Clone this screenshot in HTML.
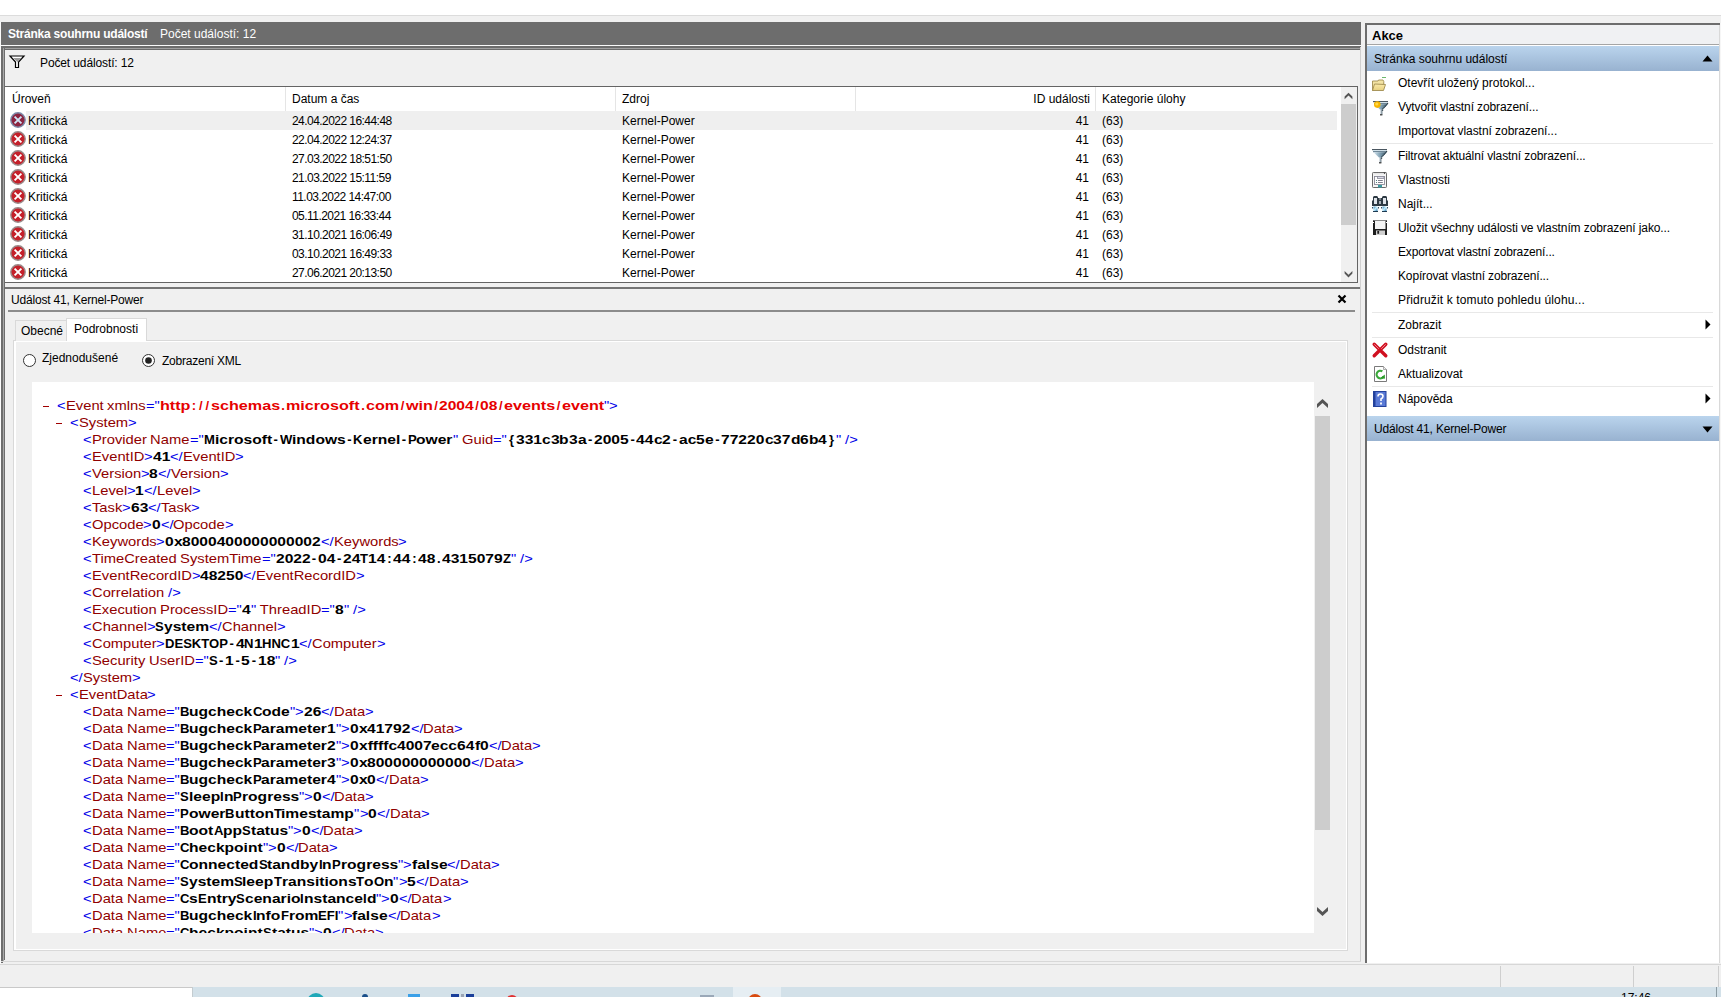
<!DOCTYPE html>
<html><head><meta charset="utf-8">
<style>
*{margin:0;padding:0;box-sizing:border-box}
html,body{width:1721px;height:997px;overflow:hidden;background:#f0f0f0;font-family:"Liberation Sans",sans-serif;font-size:12px;color:#000;position:relative}
.a{position:absolute}
.t{position:absolute;white-space:nowrap;line-height:14px}
.tr{position:absolute;white-space:nowrap;line-height:14px;text-align:right}
.x{position:absolute;white-space:nowrap;font-family:"Liberation Sans",sans-serif;font-size:13px;line-height:17px}
.x span{display:inline-block;white-space:pre;transform-origin:0 0}
.x .r{color:#900000}.x .m{color:#0000e8}.x .b,.x .bd,.x .bu,.x .bp{color:#000;font-weight:bold}.x .ns,.x .nsd,.x .nsu,.x .nsp{color:#e60000;font-weight:bold}
svg{position:absolute;overflow:visible}
</style></head><body>

<div class="a" style="left:0px;top:0px;width:1721px;height:15px;background:#fff;"></div>
<div class="a" style="left:0px;top:15px;width:1721px;height:1px;background:#dcdcdc;"></div>
<div class="a" style="left:0px;top:22px;width:1px;height:942px;background:#fbfbfb;"></div>
<div class="a" style="left:1px;top:22px;width:2px;height:941px;background:#6d6d6d;"></div>
<div class="a" style="left:1px;top:22px;width:1360px;height:23px;background:#6d6d6d;"></div>
<div class="t" style="left:8px;top:27px;color:#fff;font-weight:bold;letter-spacing:-0.22px">Stránka souhrnu událostí</div>
<div class="t" style="left:160px;top:27px;color:#fff">Počet událostí: 12</div>
<div class="a" style="left:1px;top:45px;width:1360px;height:1px;background:#fbfbfb;"></div>
<div class="a" style="left:3px;top:46px;width:1358px;height:2px;background:#6d6d6d;"></div>
<div class="a" style="left:3px;top:48px;width:1px;height:913px;background:#a8a8a8;"></div>
<div class="a" style="left:3px;top:48px;width:1358px;height:1px;background:#a0a0a0;"></div>
<div class="a" style="left:4px;top:49px;width:1357px;height:1px;background:#6d6d6d;"></div>
<div class="a" style="left:4px;top:47px;width:1px;height:913px;background:#6d6d6d;"></div>
<div class="a" style="left:1360px;top:47px;width:1px;height:915px;background:#d0d0d0;"></div>
<div class="a" style="left:1px;top:961px;width:1360px;height:1px;background:#d8d8d8;"></div>
<svg style="left:9px;top:55px" width="16" height="14" viewBox="0 0 16 14"><path d="M1 1 L15 1 L9.5 7 L9.5 12.5 L6.5 12.5 L6.5 7 Z" fill="#fff" stroke="#000" stroke-width="1.2"/><path d="M4 3 L12.5 3 L8.5 7 Z" fill="#9a9a9a"/></svg>
<div class="t" style="left:40px;top:56px;letter-spacing:-0.12px">Počet událostí: 12</div>
<div class="a" style="left:4px;top:86px;width:1354px;height:197px;background:#fff;"></div>
<div class="a" style="left:4px;top:86px;width:1354px;height:1px;background:#646464;"></div>
<div class="a" style="left:4px;top:282px;width:1354px;height:1px;background:#646464;"></div>
<div class="a" style="left:1357px;top:86px;width:1px;height:197px;background:#646464;"></div>
<div class="a" style="left:4px;top:86px;width:1px;height:197px;background:#6d6d6d;"></div>
<div class="a" style="left:285px;top:87px;width:1px;height:24px;background:#e5e5e5;"></div>
<div class="a" style="left:615px;top:87px;width:1px;height:24px;background:#e5e5e5;"></div>
<div class="a" style="left:855px;top:87px;width:1px;height:24px;background:#e5e5e5;"></div>
<div class="a" style="left:1095px;top:87px;width:1px;height:24px;background:#e5e5e5;"></div>
<div class="t" style="left:12px;top:92px;">Úroveň</div>
<div class="t" style="left:292px;top:92px;">Datum a čas</div>
<div class="t" style="left:622px;top:92px;">Zdroj</div>
<div class="tr" style="left:900px;width:190px;top:92px">ID události</div>
<div class="t" style="left:1102px;top:92px;">Kategorie úlohy</div>
<div class="a" style="left:26px;top:111px;width:1311px;height:19px;background:#efefef;"></div>
<svg style="left:10px;top:112px" width="16" height="16" viewBox="0 0 16 16"><circle cx="8" cy="8" r="7.2" fill="#8b2440" stroke="#7c8aa8" stroke-width="1.4"/><path d="M4.6 4.6 L11.4 11.4 M11.4 4.6 L4.6 11.4" stroke="#cfe3f5" stroke-width="1.9"/></svg>
<div class="t" style="left:28px;top:114px;">Kritická</div>
<div class="t" style="left:292px;top:114px;letter-spacing:-0.55px">24.04.2022 16:44:48</div>
<div class="t" style="left:622px;top:114px;">Kernel-Power</div>
<div class="tr" style="left:1000px;width:89px;top:114px">41</div>
<div class="t" style="left:1102px;top:114px;">(63)</div>
<svg style="left:10px;top:131px" width="16" height="16" viewBox="0 0 16 16"><circle cx="8" cy="8" r="7.2" fill="#c4202a" stroke="#9a8a8a" stroke-width="1.4"/><path d="M4.6 4.6 L11.4 11.4 M11.4 4.6 L4.6 11.4" stroke="#fff" stroke-width="1.9"/></svg>
<div class="t" style="left:28px;top:133px;">Kritická</div>
<div class="t" style="left:292px;top:133px;letter-spacing:-0.55px">22.04.2022 12:24:37</div>
<div class="t" style="left:622px;top:133px;">Kernel-Power</div>
<div class="tr" style="left:1000px;width:89px;top:133px">41</div>
<div class="t" style="left:1102px;top:133px;">(63)</div>
<svg style="left:10px;top:150px" width="16" height="16" viewBox="0 0 16 16"><circle cx="8" cy="8" r="7.2" fill="#c4202a" stroke="#9a8a8a" stroke-width="1.4"/><path d="M4.6 4.6 L11.4 11.4 M11.4 4.6 L4.6 11.4" stroke="#fff" stroke-width="1.9"/></svg>
<div class="t" style="left:28px;top:152px;">Kritická</div>
<div class="t" style="left:292px;top:152px;letter-spacing:-0.55px">27.03.2022 18:51:50</div>
<div class="t" style="left:622px;top:152px;">Kernel-Power</div>
<div class="tr" style="left:1000px;width:89px;top:152px">41</div>
<div class="t" style="left:1102px;top:152px;">(63)</div>
<svg style="left:10px;top:169px" width="16" height="16" viewBox="0 0 16 16"><circle cx="8" cy="8" r="7.2" fill="#c4202a" stroke="#9a8a8a" stroke-width="1.4"/><path d="M4.6 4.6 L11.4 11.4 M11.4 4.6 L4.6 11.4" stroke="#fff" stroke-width="1.9"/></svg>
<div class="t" style="left:28px;top:171px;">Kritická</div>
<div class="t" style="left:292px;top:171px;letter-spacing:-0.55px">21.03.2022 15:11:59</div>
<div class="t" style="left:622px;top:171px;">Kernel-Power</div>
<div class="tr" style="left:1000px;width:89px;top:171px">41</div>
<div class="t" style="left:1102px;top:171px;">(63)</div>
<svg style="left:10px;top:188px" width="16" height="16" viewBox="0 0 16 16"><circle cx="8" cy="8" r="7.2" fill="#c4202a" stroke="#9a8a8a" stroke-width="1.4"/><path d="M4.6 4.6 L11.4 11.4 M11.4 4.6 L4.6 11.4" stroke="#fff" stroke-width="1.9"/></svg>
<div class="t" style="left:28px;top:190px;">Kritická</div>
<div class="t" style="left:292px;top:190px;letter-spacing:-0.55px">11.03.2022 14:47:00</div>
<div class="t" style="left:622px;top:190px;">Kernel-Power</div>
<div class="tr" style="left:1000px;width:89px;top:190px">41</div>
<div class="t" style="left:1102px;top:190px;">(63)</div>
<svg style="left:10px;top:207px" width="16" height="16" viewBox="0 0 16 16"><circle cx="8" cy="8" r="7.2" fill="#c4202a" stroke="#9a8a8a" stroke-width="1.4"/><path d="M4.6 4.6 L11.4 11.4 M11.4 4.6 L4.6 11.4" stroke="#fff" stroke-width="1.9"/></svg>
<div class="t" style="left:28px;top:209px;">Kritická</div>
<div class="t" style="left:292px;top:209px;letter-spacing:-0.55px">05.11.2021 16:33:44</div>
<div class="t" style="left:622px;top:209px;">Kernel-Power</div>
<div class="tr" style="left:1000px;width:89px;top:209px">41</div>
<div class="t" style="left:1102px;top:209px;">(63)</div>
<svg style="left:10px;top:226px" width="16" height="16" viewBox="0 0 16 16"><circle cx="8" cy="8" r="7.2" fill="#c4202a" stroke="#9a8a8a" stroke-width="1.4"/><path d="M4.6 4.6 L11.4 11.4 M11.4 4.6 L4.6 11.4" stroke="#fff" stroke-width="1.9"/></svg>
<div class="t" style="left:28px;top:228px;">Kritická</div>
<div class="t" style="left:292px;top:228px;letter-spacing:-0.55px">31.10.2021 16:06:49</div>
<div class="t" style="left:622px;top:228px;">Kernel-Power</div>
<div class="tr" style="left:1000px;width:89px;top:228px">41</div>
<div class="t" style="left:1102px;top:228px;">(63)</div>
<svg style="left:10px;top:245px" width="16" height="16" viewBox="0 0 16 16"><circle cx="8" cy="8" r="7.2" fill="#c4202a" stroke="#9a8a8a" stroke-width="1.4"/><path d="M4.6 4.6 L11.4 11.4 M11.4 4.6 L4.6 11.4" stroke="#fff" stroke-width="1.9"/></svg>
<div class="t" style="left:28px;top:247px;">Kritická</div>
<div class="t" style="left:292px;top:247px;letter-spacing:-0.55px">03.10.2021 16:49:33</div>
<div class="t" style="left:622px;top:247px;">Kernel-Power</div>
<div class="tr" style="left:1000px;width:89px;top:247px">41</div>
<div class="t" style="left:1102px;top:247px;">(63)</div>
<svg style="left:10px;top:264px" width="16" height="16" viewBox="0 0 16 16"><circle cx="8" cy="8" r="7.2" fill="#c4202a" stroke="#9a8a8a" stroke-width="1.4"/><path d="M4.6 4.6 L11.4 11.4 M11.4 4.6 L4.6 11.4" stroke="#fff" stroke-width="1.9"/></svg>
<div class="t" style="left:28px;top:266px;">Kritická</div>
<div class="t" style="left:292px;top:266px;letter-spacing:-0.55px">27.06.2021 20:13:50</div>
<div class="t" style="left:622px;top:266px;">Kernel-Power</div>
<div class="tr" style="left:1000px;width:89px;top:266px">41</div>
<div class="t" style="left:1102px;top:266px;">(63)</div>
<div class="a" style="left:1341px;top:87px;width:16px;height:195px;background:#f0f0f0;"></div>
<div class="a" style="left:1341px;top:104px;width:15px;height:121px;background:#cdcdcd;"></div>
<svg style="left:0;top:0" width="1721" height="997"><path d="M1344.6 96.6 L1348.5 92.7 L1352.4 96.6 L1352.4 99.3 L1348.5 95.4 L1344.6 99.3 Z" fill="#555"/></svg>
<svg style="left:0;top:0" width="1721" height="997"><path d="M1344.6 270.9 L1348.5 274.8 L1352.4 270.9 L1352.4 273.6 L1348.5 277.5 L1344.6 273.6 Z" fill="#555"/></svg>
<div class="a" style="left:5px;top:287px;width:1355px;height:2px;background:#747474;"></div>
<div class="a" style="left:5px;top:289px;width:1355px;height:22px;background:#f0f0f0;"></div>
<div class="t" style="left:11px;top:293px;letter-spacing:-0.18px">Událost 41, Kernel-Power</div>
<svg style="left:1337px;top:294px" width="10" height="10" viewBox="0 0 10 10"><path d="M1.5 1.5 L8.5 8.5 M8.5 1.5 L1.5 8.5" stroke="#000" stroke-width="2.2"/></svg>
<div class="a" style="left:8px;top:310px;width:1347px;height:2px;background:#8c8c8c;"></div>
<div class="a" style="left:13px;top:340px;width:1335px;height:611px;background:#d9d9d9;"></div>
<div class="a" style="left:14px;top:341px;width:1333px;height:609px;background:#fff;"></div>
<div class="a" style="left:16px;top:342px;width:1330px;height:607px;background:#f0f0f0;"></div>
<div class="a" style="left:15px;top:320px;width:52px;height:21px;background:#d9d9d9;"></div>
<div class="a" style="left:16px;top:321px;width:50px;height:20px;background:#f0f0f0;"></div>
<div class="a" style="left:66px;top:318px;width:81px;height:23px;background:#d9d9d9;"></div>
<div class="a" style="left:67px;top:319px;width:79px;height:23px;background:#fff;"></div>
<div class="t" style="left:21px;top:324px;">Obecné</div>
<div class="t" style="left:74px;top:322px;">Podrobnosti</div>
<svg style="left:22px;top:353px" width="15" height="15" viewBox="0 0 15 15"><circle cx="7.5" cy="7.5" r="6" fill="#fff" stroke="#333" stroke-width="1"/></svg>
<div class="t" style="left:42px;top:351px;">Zjednodušené</div>
<svg style="left:141px;top:353px" width="15" height="15" viewBox="0 0 15 15"><circle cx="7.5" cy="7.5" r="6" fill="#fff" stroke="#333" stroke-width="1"/><circle cx="7.5" cy="7.5" r="3.3" fill="#222"/></svg>
<div class="t" style="left:162px;top:354px;letter-spacing:-0.23px">Zobrazení XML</div>
<div class="a" style="left:32px;top:382px;width:1282px;height:551px;background:#fff;"></div>
<div class="a" style="left:1314px;top:382px;width:17px;height:551px;background:#f0f0f0;"></div>
<div class="a" style="left:1315px;top:416px;width:15px;height:414px;background:#cdcdcd;"></div>
<svg style="left:0;top:0" width="1721" height="997"><path d="M1317 404 L1322.5 399 L1328 404 L1328 408 L1322.5 403 L1317 408 Z" fill="#555"/></svg>
<svg style="left:0;top:0" width="1721" height="997"><path d="M1317 907 L1322.5 912 L1328 907 L1328 911 L1322.5 916 L1317 911 Z" fill="#555"/></svg>
<div class="a" style="left:32px;top:382px;width:1282px;height:551px;overflow:hidden">
<div class="a" style="left:11px;top:24px;width:6px;height:1.4px;background:#a00000"></div>
<div class="x" style="left:25px;top:15px"><span class="m" style="transform:scaleX(1.1327);margin-right:1.008px">&lt;</span><span class="r" style="transform:scaleX(1.1339);margin-right:4.453px">Event</span><span class="r" style="transform:scaleX(1.1339);margin-right:5.030px"> xmlns</span><span class="m" style="transform:scaleX(1.1327);margin-right:1.621px">="</span><span class="ns" style="transform:scaleX(1.2422);margin-right:5.946px">http</span><span class="nsp" style="letter-spacing:2.988px;padding-left:1.494px;margin-right:-1.494px">://</span><span class="ns" style="transform:scaleX(1.2422);margin-right:13.482px">schemas</span><span class="nsp" style="letter-spacing:2.810px;padding-left:1.405px;margin-right:-1.405px">.</span><span class="ns" style="transform:scaleX(1.2422);margin-right:14.348px">microsoft</span><span class="nsp" style="letter-spacing:2.810px;padding-left:1.405px;margin-right:-1.405px">.</span><span class="ns" style="transform:scaleX(1.2422);margin-right:6.476px">com</span><span class="nsp" style="letter-spacing:2.810px;padding-left:1.405px;margin-right:-1.405px">/</span><span class="ns" style="transform:scaleX(1.2422);margin-right:5.250px">win</span><span class="nsp" style="letter-spacing:2.810px;padding-left:1.405px;margin-right:-1.405px">/</span><span class="nsd" style="transform:scaleX(1.1990);margin-right:5.755px">2004</span><span class="nsp" style="letter-spacing:2.810px;padding-left:1.405px;margin-right:-1.405px">/</span><span class="nsd" style="transform:scaleX(1.1990);margin-right:2.879px">08</span><span class="nsp" style="letter-spacing:2.810px;padding-left:1.405px;margin-right:-1.405px">/</span><span class="ns" style="transform:scaleX(1.2422);margin-right:9.981px">events</span><span class="nsp" style="letter-spacing:2.810px;padding-left:1.405px;margin-right:-1.405px">/</span><span class="ns" style="transform:scaleX(1.2422);margin-right:8.228px">event</span><span class="m" style="transform:scaleX(1.1327);margin-right:0.614px">"</span><span class="m" style="transform:scaleX(1.1327);margin-right:1.008px">&gt;</span></div>
<div class="a" style="left:24px;top:41px;width:6px;height:1.4px;background:#a00000"></div>
<div class="x" style="left:38px;top:32px"><span class="m" style="transform:scaleX(1.1327);margin-right:1.008px">&lt;</span><span class="r" style="transform:scaleX(1.1339);margin-right:5.804px">System</span><span class="m" style="transform:scaleX(1.1327);margin-right:1.008px">&gt;</span></div>
<div class="x" style="left:51px;top:49px"><span class="m" style="transform:scaleX(1.1327);margin-right:1.008px">&lt;</span><span class="r" style="transform:scaleX(1.1339);margin-right:6.484px">Provider</span><span class="r" style="transform:scaleX(1.1339);margin-right:5.128px"> Name</span><span class="m" style="transform:scaleX(1.1327);margin-right:1.621px">="</span><span class="bu" style="transform:scaleX(1.0047);margin-right:0.051px">M</span><span class="b" style="transform:scaleX(1.2002);margin-right:9.545px">icrosoft</span><span class="bp" style="letter-spacing:3.367px;padding-left:1.684px;margin-right:-1.684px">-</span><span class="bu" style="transform:scaleX(1.0047);margin-right:0.058px">W</span><span class="b" style="transform:scaleX(1.2002);margin-right:8.966px">indows</span><span class="bp" style="letter-spacing:3.367px;padding-left:1.684px;margin-right:-1.684px">-</span><span class="bu" style="transform:scaleX(1.0047);margin-right:0.044px">K</span><span class="b" style="transform:scaleX(1.2002);margin-right:6.223px">ernel</span><span class="bp" style="letter-spacing:3.367px;padding-left:1.684px;margin-right:-1.684px">-</span><span class="bu" style="transform:scaleX(1.0047);margin-right:0.041px">P</span><span class="b" style="transform:scaleX(1.2002);margin-right:6.076px">ower</span><span class="m" style="transform:scaleX(1.1327);margin-right:0.614px">"</span><span class="r" style="transform:scaleX(1.1339);margin-right:4.162px"> Guid</span><span class="m" style="transform:scaleX(1.1327);margin-right:1.621px">="</span><span class="bp" style="letter-spacing:3.924px;padding-left:1.962px;margin-right:-1.962px">{</span><span class="bd" style="transform:scaleX(1.1990);margin-right:4.319px">331</span><span class="b" style="transform:scaleX(1.2002);margin-right:1.448px">c</span><span class="bd" style="transform:scaleX(1.1990);margin-right:1.440px">3</span><span class="b" style="transform:scaleX(1.2002);margin-right:1.592px">b</span><span class="bd" style="transform:scaleX(1.1990);margin-right:1.440px">3</span><span class="b" style="transform:scaleX(1.2002);margin-right:1.448px">a</span><span class="bp" style="letter-spacing:3.367px;padding-left:1.684px;margin-right:-1.684px">-</span><span class="bd" style="transform:scaleX(1.1990);margin-right:5.755px">2005</span><span class="bp" style="letter-spacing:3.367px;padding-left:1.684px;margin-right:-1.684px">-</span><span class="bd" style="transform:scaleX(1.1990);margin-right:2.879px">44</span><span class="b" style="transform:scaleX(1.2002);margin-right:1.448px">c</span><span class="bd" style="transform:scaleX(1.1990);margin-right:1.440px">2</span><span class="bp" style="letter-spacing:3.367px;padding-left:1.684px;margin-right:-1.684px">-</span><span class="b" style="transform:scaleX(1.2002);margin-right:2.897px">ac</span><span class="bd" style="transform:scaleX(1.1990);margin-right:1.440px">5</span><span class="b" style="transform:scaleX(1.2002);margin-right:1.448px">e</span><span class="bp" style="letter-spacing:3.367px;padding-left:1.684px;margin-right:-1.684px">-</span><span class="bd" style="transform:scaleX(1.1990);margin-right:7.195px">77220</span><span class="b" style="transform:scaleX(1.2002);margin-right:1.448px">c</span><span class="bd" style="transform:scaleX(1.1990);margin-right:2.879px">37</span><span class="b" style="transform:scaleX(1.2002);margin-right:1.592px">d</span><span class="bd" style="transform:scaleX(1.1990);margin-right:1.440px">6</span><span class="b" style="transform:scaleX(1.2002);margin-right:1.592px">b</span><span class="bd" style="transform:scaleX(1.1990);margin-right:1.440px">4</span><span class="bp" style="letter-spacing:3.924px;padding-left:1.962px;margin-right:-1.962px">}</span><span class="m" style="transform:scaleX(1.1327);margin-right:0.614px">"</span><span class="m" style="transform:scaleX(1.1327);margin-right:1.968px"> /&gt;</span></div>
<div class="x" style="left:51px;top:66px"><span class="m" style="transform:scaleX(1.1327);margin-right:1.008px">&lt;</span><span class="r" style="transform:scaleX(1.1339);margin-right:6.193px">EventID</span><span class="m" style="transform:scaleX(1.1327);margin-right:1.008px">&gt;</span><span class="bd" style="transform:scaleX(1.1990);margin-right:2.879px">41</span><span class="m" style="transform:scaleX(1.1327);margin-right:1.489px">&lt;/</span><span class="r" style="transform:scaleX(1.1339);margin-right:6.193px">EventID</span><span class="m" style="transform:scaleX(1.1327);margin-right:1.008px">&gt;</span></div>
<div class="x" style="left:51px;top:83px"><span class="m" style="transform:scaleX(1.1327);margin-right:1.008px">&lt;</span><span class="r" style="transform:scaleX(1.1339);margin-right:5.808px">Version</span><span class="m" style="transform:scaleX(1.1327);margin-right:1.008px">&gt;</span><span class="bd" style="transform:scaleX(1.1990);margin-right:1.440px">8</span><span class="m" style="transform:scaleX(1.1327);margin-right:1.489px">&lt;/</span><span class="r" style="transform:scaleX(1.1339);margin-right:5.808px">Version</span><span class="m" style="transform:scaleX(1.1327);margin-right:1.008px">&gt;</span></div>
<div class="x" style="left:51px;top:100px"><span class="m" style="transform:scaleX(1.1327);margin-right:1.008px">&lt;</span><span class="r" style="transform:scaleX(1.1339);margin-right:4.162px">Level</span><span class="m" style="transform:scaleX(1.1327);margin-right:1.008px">&gt;</span><span class="bd" style="transform:scaleX(1.1990);margin-right:1.440px">1</span><span class="m" style="transform:scaleX(1.1327);margin-right:1.489px">&lt;/</span><span class="r" style="transform:scaleX(1.1339);margin-right:4.162px">Level</span><span class="m" style="transform:scaleX(1.1327);margin-right:1.008px">&gt;</span></div>
<div class="x" style="left:51px;top:117px"><span class="m" style="transform:scaleX(1.1327);margin-right:1.008px">&lt;</span><span class="r" style="transform:scaleX(1.1339);margin-right:3.580px">Task</span><span class="m" style="transform:scaleX(1.1327);margin-right:1.008px">&gt;</span><span class="bd" style="transform:scaleX(1.1990);margin-right:2.879px">63</span><span class="m" style="transform:scaleX(1.1327);margin-right:1.489px">&lt;/</span><span class="r" style="transform:scaleX(1.1339);margin-right:3.580px">Task</span><span class="m" style="transform:scaleX(1.1327);margin-right:1.008px">&gt;</span></div>
<div class="x" style="left:51px;top:134px"><span class="m" style="transform:scaleX(1.1327);margin-right:1.008px">&lt;</span><span class="r" style="transform:scaleX(1.1339);margin-right:6.099px">Opcode</span><span class="m" style="transform:scaleX(1.1327);margin-right:1.008px">&gt;</span><span class="bd" style="transform:scaleX(1.1990);margin-right:1.440px">0</span><span class="m" style="transform:scaleX(1.1327);margin-right:1.489px">&lt;/</span><span class="r" style="transform:scaleX(1.1339);margin-right:6.099px">Opcode</span><span class="m" style="transform:scaleX(1.1327);margin-right:1.008px">&gt;</span></div>
<div class="x" style="left:51px;top:151px"><span class="m" style="transform:scaleX(1.1327);margin-right:1.008px">&lt;</span><span class="r" style="transform:scaleX(1.1339);margin-right:7.644px">Keywords</span><span class="m" style="transform:scaleX(1.1327);margin-right:1.008px">&gt;</span><span class="bd" style="transform:scaleX(1.1990);margin-right:1.440px">0</span><span class="b" style="transform:scaleX(1.2002);margin-right:1.448px">x</span><span class="bd" style="transform:scaleX(1.1990);margin-right:23.022px">8000400000000002</span><span class="m" style="transform:scaleX(1.1327);margin-right:1.489px">&lt;/</span><span class="r" style="transform:scaleX(1.1339);margin-right:7.644px">Keywords</span><span class="m" style="transform:scaleX(1.1327);margin-right:1.008px">&gt;</span></div>
<div class="x" style="left:51px;top:168px"><span class="m" style="transform:scaleX(1.1327);margin-right:1.008px">&lt;</span><span class="r" style="transform:scaleX(1.1339);margin-right:9.997px">TimeCreated</span><span class="r" style="transform:scaleX(1.1339);margin-right:10.092px"> SystemTime</span><span class="m" style="transform:scaleX(1.1327);margin-right:1.621px">="</span><span class="bd" style="transform:scaleX(1.1990);margin-right:5.755px">2022</span><span class="bp" style="letter-spacing:3.367px;padding-left:1.684px;margin-right:-1.684px">-</span><span class="bd" style="transform:scaleX(1.1990);margin-right:2.879px">04</span><span class="bp" style="letter-spacing:3.367px;padding-left:1.684px;margin-right:-1.684px">-</span><span class="bd" style="transform:scaleX(1.1990);margin-right:2.879px">24</span><span class="bu" style="transform:scaleX(1.0047);margin-right:0.037px">T</span><span class="bd" style="transform:scaleX(1.1990);margin-right:2.879px">14</span><span class="bp" style="letter-spacing:3.367px;padding-left:1.684px;margin-right:-1.684px">:</span><span class="bd" style="transform:scaleX(1.1990);margin-right:2.879px">44</span><span class="bp" style="letter-spacing:3.367px;padding-left:1.684px;margin-right:-1.684px">:</span><span class="bd" style="transform:scaleX(1.1990);margin-right:2.879px">48</span><span class="bp" style="letter-spacing:2.810px;padding-left:1.405px;margin-right:-1.405px">.</span><span class="bd" style="transform:scaleX(1.1990);margin-right:10.074px">4315079</span><span class="bu" style="transform:scaleX(1.0047);margin-right:0.037px">Z</span><span class="m" style="transform:scaleX(1.1327);margin-right:0.614px">"</span><span class="m" style="transform:scaleX(1.1327);margin-right:1.968px"> /&gt;</span></div>
<div class="x" style="left:51px;top:185px"><span class="m" style="transform:scaleX(1.1327);margin-right:1.008px">&lt;</span><span class="r" style="transform:scaleX(1.1339);margin-right:11.805px">EventRecordID</span><span class="m" style="transform:scaleX(1.1327);margin-right:1.008px">&gt;</span><span class="bd" style="transform:scaleX(1.1990);margin-right:7.195px">48250</span><span class="m" style="transform:scaleX(1.1327);margin-right:1.489px">&lt;/</span><span class="r" style="transform:scaleX(1.1339);margin-right:11.805px">EventRecordID</span><span class="m" style="transform:scaleX(1.1327);margin-right:1.008px">&gt;</span></div>
<div class="x" style="left:51px;top:202px"><span class="m" style="transform:scaleX(1.1327);margin-right:1.008px">&lt;</span><span class="r" style="transform:scaleX(1.1339);margin-right:8.516px">Correlation</span><span class="m" style="transform:scaleX(1.1327);margin-right:1.968px"> /&gt;</span></div>
<div class="x" style="left:51px;top:219px"><span class="m" style="transform:scaleX(1.1327);margin-right:1.008px">&lt;</span><span class="r" style="transform:scaleX(1.1339);margin-right:7.646px">Execution</span><span class="r" style="transform:scaleX(1.1339);margin-right:8.514px"> ProcessID</span><span class="m" style="transform:scaleX(1.1327);margin-right:1.621px">="</span><span class="bd" style="transform:scaleX(1.1990);margin-right:1.440px">4</span><span class="m" style="transform:scaleX(1.1327);margin-right:0.614px">"</span><span class="r" style="transform:scaleX(1.1339);margin-right:7.710px"> ThreadID</span><span class="m" style="transform:scaleX(1.1327);margin-right:1.621px">="</span><span class="bd" style="transform:scaleX(1.1990);margin-right:1.440px">8</span><span class="m" style="transform:scaleX(1.1327);margin-right:0.614px">"</span><span class="m" style="transform:scaleX(1.1327);margin-right:1.968px"> /&gt;</span></div>
<div class="x" style="left:51px;top:236px"><span class="m" style="transform:scaleX(1.1327);margin-right:1.008px">&lt;</span><span class="r" style="transform:scaleX(1.1339);margin-right:6.486px">Channel</span><span class="m" style="transform:scaleX(1.1327);margin-right:1.008px">&gt;</span><span class="bu" style="transform:scaleX(1.0047);margin-right:0.041px">S</span><span class="b" style="transform:scaleX(1.2002);margin-right:7.524px">ystem</span><span class="m" style="transform:scaleX(1.1327);margin-right:1.489px">&lt;/</span><span class="r" style="transform:scaleX(1.1339);margin-right:6.486px">Channel</span><span class="m" style="transform:scaleX(1.1327);margin-right:1.008px">&gt;</span></div>
<div class="x" style="left:51px;top:253px"><span class="m" style="transform:scaleX(1.1327);margin-right:1.008px">&lt;</span><span class="r" style="transform:scaleX(1.1339);margin-right:7.644px">Computer</span><span class="m" style="transform:scaleX(1.1327);margin-right:1.008px">&gt;</span><span class="bu" style="transform:scaleX(1.0047);margin-right:0.295px">DESKTOP</span><span class="bp" style="letter-spacing:3.367px;padding-left:1.684px;margin-right:-1.684px">-</span><span class="bd" style="transform:scaleX(1.1990);margin-right:1.440px">4</span><span class="bu" style="transform:scaleX(1.0047);margin-right:0.044px">N</span><span class="bd" style="transform:scaleX(1.1990);margin-right:1.440px">1</span><span class="bu" style="transform:scaleX(1.0047);margin-right:0.133px">HNC</span><span class="bd" style="transform:scaleX(1.1990);margin-right:1.440px">1</span><span class="m" style="transform:scaleX(1.1327);margin-right:1.489px">&lt;/</span><span class="r" style="transform:scaleX(1.1339);margin-right:7.644px">Computer</span><span class="m" style="transform:scaleX(1.1327);margin-right:1.008px">&gt;</span></div>
<div class="x" style="left:51px;top:270px"><span class="m" style="transform:scaleX(1.1327);margin-right:1.008px">&lt;</span><span class="r" style="transform:scaleX(1.1339);margin-right:6.290px">Security</span><span class="r" style="transform:scaleX(1.1339);margin-right:5.901px"> UserID</span><span class="m" style="transform:scaleX(1.1327);margin-right:1.621px">="</span><span class="bu" style="transform:scaleX(1.0047);margin-right:0.041px">S</span><span class="bp" style="letter-spacing:3.367px;padding-left:1.684px;margin-right:-1.684px">-</span><span class="bd" style="transform:scaleX(1.1990);margin-right:1.440px">1</span><span class="bp" style="letter-spacing:3.367px;padding-left:1.684px;margin-right:-1.684px">-</span><span class="bd" style="transform:scaleX(1.1990);margin-right:1.440px">5</span><span class="bp" style="letter-spacing:3.367px;padding-left:1.684px;margin-right:-1.684px">-</span><span class="bd" style="transform:scaleX(1.1990);margin-right:2.879px">18</span><span class="m" style="transform:scaleX(1.1327);margin-right:0.614px">"</span><span class="m" style="transform:scaleX(1.1327);margin-right:1.968px"> /&gt;</span></div>
<div class="x" style="left:38px;top:287px"><span class="m" style="transform:scaleX(1.1327);margin-right:1.489px">&lt;/</span><span class="r" style="transform:scaleX(1.1339);margin-right:5.804px">System</span><span class="m" style="transform:scaleX(1.1327);margin-right:1.008px">&gt;</span></div>
<div class="a" style="left:24px;top:313px;width:6px;height:1.4px;background:#a00000"></div>
<div class="x" style="left:38px;top:304px"><span class="m" style="transform:scaleX(1.1327);margin-right:1.008px">&lt;</span><span class="r" style="transform:scaleX(1.1339);margin-right:8.129px">EventData</span><span class="m" style="transform:scaleX(1.1327);margin-right:1.008px">&gt;</span></div>
<div class="x" style="left:51px;top:321px"><span class="m" style="transform:scaleX(1.1327);margin-right:1.008px">&lt;</span><span class="r" style="transform:scaleX(1.1339);margin-right:3.678px">Data</span><span class="r" style="transform:scaleX(1.1339);margin-right:5.128px"> Name</span><span class="m" style="transform:scaleX(1.1327);margin-right:1.621px">="</span><span class="bu" style="transform:scaleX(1.0047);margin-right:0.044px">B</span><span class="b" style="transform:scaleX(1.2002);margin-right:10.562px">ugcheck</span><span class="bu" style="transform:scaleX(1.0047);margin-right:0.044px">C</span><span class="b" style="transform:scaleX(1.2002);margin-right:4.630px">ode</span><span class="m" style="transform:scaleX(1.1327);margin-right:0.614px">"</span><span class="m" style="transform:scaleX(1.1327);margin-right:1.008px">&gt;</span><span class="bd" style="transform:scaleX(1.1990);margin-right:2.879px">26</span><span class="m" style="transform:scaleX(1.1327);margin-right:1.489px">&lt;/</span><span class="r" style="transform:scaleX(1.1339);margin-right:3.678px">Data</span><span class="m" style="transform:scaleX(1.1327);margin-right:1.008px">&gt;</span></div>
<div class="x" style="left:51px;top:338px"><span class="m" style="transform:scaleX(1.1327);margin-right:1.008px">&lt;</span><span class="r" style="transform:scaleX(1.1339);margin-right:3.678px">Data</span><span class="r" style="transform:scaleX(1.1339);margin-right:5.128px"> Name</span><span class="m" style="transform:scaleX(1.1327);margin-right:1.621px">="</span><span class="bu" style="transform:scaleX(1.0047);margin-right:0.044px">B</span><span class="b" style="transform:scaleX(1.2002);margin-right:10.562px">ugcheck</span><span class="bu" style="transform:scaleX(1.0047);margin-right:0.041px">P</span><span class="b" style="transform:scaleX(1.2002);margin-right:11.000px">arameter</span><span class="bd" style="transform:scaleX(1.1990);margin-right:1.440px">1</span><span class="m" style="transform:scaleX(1.1327);margin-right:0.614px">"</span><span class="m" style="transform:scaleX(1.1327);margin-right:1.008px">&gt;</span><span class="bd" style="transform:scaleX(1.1990);margin-right:1.440px">0</span><span class="b" style="transform:scaleX(1.2002);margin-right:1.448px">x</span><span class="bd" style="transform:scaleX(1.1990);margin-right:7.195px">41792</span><span class="m" style="transform:scaleX(1.1327);margin-right:1.489px">&lt;/</span><span class="r" style="transform:scaleX(1.1339);margin-right:3.678px">Data</span><span class="m" style="transform:scaleX(1.1327);margin-right:1.008px">&gt;</span></div>
<div class="x" style="left:51px;top:355px"><span class="m" style="transform:scaleX(1.1327);margin-right:1.008px">&lt;</span><span class="r" style="transform:scaleX(1.1339);margin-right:3.678px">Data</span><span class="r" style="transform:scaleX(1.1339);margin-right:5.128px"> Name</span><span class="m" style="transform:scaleX(1.1327);margin-right:1.621px">="</span><span class="bu" style="transform:scaleX(1.0047);margin-right:0.044px">B</span><span class="b" style="transform:scaleX(1.2002);margin-right:10.562px">ugcheck</span><span class="bu" style="transform:scaleX(1.0047);margin-right:0.041px">P</span><span class="b" style="transform:scaleX(1.2002);margin-right:11.000px">arameter</span><span class="bd" style="transform:scaleX(1.1990);margin-right:1.440px">2</span><span class="m" style="transform:scaleX(1.1327);margin-right:0.614px">"</span><span class="m" style="transform:scaleX(1.1327);margin-right:1.008px">&gt;</span><span class="bd" style="transform:scaleX(1.1990);margin-right:1.440px">0</span><span class="b" style="transform:scaleX(1.2002);margin-right:6.363px">xffffc</span><span class="bd" style="transform:scaleX(1.1990);margin-right:5.755px">4007</span><span class="b" style="transform:scaleX(1.2002);margin-right:4.345px">ecc</span><span class="bd" style="transform:scaleX(1.1990);margin-right:2.879px">64</span><span class="b" style="transform:scaleX(1.2002);margin-right:0.870px">f</span><span class="bd" style="transform:scaleX(1.1990);margin-right:1.440px">0</span><span class="m" style="transform:scaleX(1.1327);margin-right:1.489px">&lt;/</span><span class="r" style="transform:scaleX(1.1339);margin-right:3.678px">Data</span><span class="m" style="transform:scaleX(1.1327);margin-right:1.008px">&gt;</span></div>
<div class="x" style="left:51px;top:372px"><span class="m" style="transform:scaleX(1.1327);margin-right:1.008px">&lt;</span><span class="r" style="transform:scaleX(1.1339);margin-right:3.678px">Data</span><span class="r" style="transform:scaleX(1.1339);margin-right:5.128px"> Name</span><span class="m" style="transform:scaleX(1.1327);margin-right:1.621px">="</span><span class="bu" style="transform:scaleX(1.0047);margin-right:0.044px">B</span><span class="b" style="transform:scaleX(1.2002);margin-right:10.562px">ugcheck</span><span class="bu" style="transform:scaleX(1.0047);margin-right:0.041px">P</span><span class="b" style="transform:scaleX(1.2002);margin-right:11.000px">arameter</span><span class="bd" style="transform:scaleX(1.1990);margin-right:1.440px">3</span><span class="m" style="transform:scaleX(1.1327);margin-right:0.614px">"</span><span class="m" style="transform:scaleX(1.1327);margin-right:1.008px">&gt;</span><span class="bd" style="transform:scaleX(1.1990);margin-right:1.440px">0</span><span class="b" style="transform:scaleX(1.2002);margin-right:1.448px">x</span><span class="bd" style="transform:scaleX(1.1990);margin-right:17.266px">800000000000</span><span class="m" style="transform:scaleX(1.1327);margin-right:1.489px">&lt;/</span><span class="r" style="transform:scaleX(1.1339);margin-right:3.678px">Data</span><span class="m" style="transform:scaleX(1.1327);margin-right:1.008px">&gt;</span></div>
<div class="x" style="left:51px;top:389px"><span class="m" style="transform:scaleX(1.1327);margin-right:1.008px">&lt;</span><span class="r" style="transform:scaleX(1.1339);margin-right:3.678px">Data</span><span class="r" style="transform:scaleX(1.1339);margin-right:5.128px"> Name</span><span class="m" style="transform:scaleX(1.1327);margin-right:1.621px">="</span><span class="bu" style="transform:scaleX(1.0047);margin-right:0.044px">B</span><span class="b" style="transform:scaleX(1.2002);margin-right:10.562px">ugcheck</span><span class="bu" style="transform:scaleX(1.0047);margin-right:0.041px">P</span><span class="b" style="transform:scaleX(1.2002);margin-right:11.000px">arameter</span><span class="bd" style="transform:scaleX(1.1990);margin-right:1.440px">4</span><span class="m" style="transform:scaleX(1.1327);margin-right:0.614px">"</span><span class="m" style="transform:scaleX(1.1327);margin-right:1.008px">&gt;</span><span class="bd" style="transform:scaleX(1.1990);margin-right:1.440px">0</span><span class="b" style="transform:scaleX(1.2002);margin-right:1.448px">x</span><span class="bd" style="transform:scaleX(1.1990);margin-right:1.440px">0</span><span class="m" style="transform:scaleX(1.1327);margin-right:1.489px">&lt;/</span><span class="r" style="transform:scaleX(1.1339);margin-right:3.678px">Data</span><span class="m" style="transform:scaleX(1.1327);margin-right:1.008px">&gt;</span></div>
<div class="x" style="left:51px;top:406px"><span class="m" style="transform:scaleX(1.1327);margin-right:1.008px">&lt;</span><span class="r" style="transform:scaleX(1.1339);margin-right:3.678px">Data</span><span class="r" style="transform:scaleX(1.1339);margin-right:5.128px"> Name</span><span class="m" style="transform:scaleX(1.1327);margin-right:1.621px">="</span><span class="bu" style="transform:scaleX(1.0047);margin-right:0.041px">S</span><span class="b" style="transform:scaleX(1.2002);margin-right:5.209px">leep</span><span class="bu" style="transform:scaleX(1.0047);margin-right:0.017px">I</span><span class="b" style="transform:scaleX(1.2002);margin-right:1.592px">n</span><span class="bu" style="transform:scaleX(1.0047);margin-right:0.041px">P</span><span class="b" style="transform:scaleX(1.2002);margin-right:9.551px">rogress</span><span class="m" style="transform:scaleX(1.1327);margin-right:0.614px">"</span><span class="m" style="transform:scaleX(1.1327);margin-right:1.008px">&gt;</span><span class="bd" style="transform:scaleX(1.1990);margin-right:1.440px">0</span><span class="m" style="transform:scaleX(1.1327);margin-right:1.489px">&lt;/</span><span class="r" style="transform:scaleX(1.1339);margin-right:3.678px">Data</span><span class="m" style="transform:scaleX(1.1327);margin-right:1.008px">&gt;</span></div>
<div class="x" style="left:51px;top:423px"><span class="m" style="transform:scaleX(1.1327);margin-right:1.008px">&lt;</span><span class="r" style="transform:scaleX(1.1339);margin-right:3.678px">Data</span><span class="r" style="transform:scaleX(1.1339);margin-right:5.128px"> Name</span><span class="m" style="transform:scaleX(1.1327);margin-right:1.621px">="</span><span class="bu" style="transform:scaleX(1.0047);margin-right:0.041px">P</span><span class="b" style="transform:scaleX(1.2002);margin-right:6.076px">ower</span><span class="bu" style="transform:scaleX(1.0047);margin-right:0.044px">B</span><span class="b" style="transform:scaleX(1.2002);margin-right:6.504px">utton</span><span class="bu" style="transform:scaleX(1.0047);margin-right:0.037px">T</span><span class="b" style="transform:scaleX(1.2002);margin-right:12.154px">imestamp</span><span class="m" style="transform:scaleX(1.1327);margin-right:0.614px">"</span><span class="m" style="transform:scaleX(1.1327);margin-right:1.008px">&gt;</span><span class="bd" style="transform:scaleX(1.1990);margin-right:1.440px">0</span><span class="m" style="transform:scaleX(1.1327);margin-right:1.489px">&lt;/</span><span class="r" style="transform:scaleX(1.1339);margin-right:3.678px">Data</span><span class="m" style="transform:scaleX(1.1327);margin-right:1.008px">&gt;</span></div>
<div class="x" style="left:51px;top:440px"><span class="m" style="transform:scaleX(1.1327);margin-right:1.008px">&lt;</span><span class="r" style="transform:scaleX(1.1339);margin-right:3.678px">Data</span><span class="r" style="transform:scaleX(1.1339);margin-right:5.128px"> Name</span><span class="m" style="transform:scaleX(1.1327);margin-right:1.621px">="</span><span class="bu" style="transform:scaleX(1.0047);margin-right:0.044px">B</span><span class="b" style="transform:scaleX(1.2002);margin-right:4.048px">oot</span><span class="bu" style="transform:scaleX(1.0047);margin-right:0.044px">A</span><span class="b" style="transform:scaleX(1.2002);margin-right:3.182px">pp</span><span class="bu" style="transform:scaleX(1.0047);margin-right:0.041px">S</span><span class="b" style="transform:scaleX(1.2002);margin-right:6.219px">tatus</span><span class="m" style="transform:scaleX(1.1327);margin-right:0.614px">"</span><span class="m" style="transform:scaleX(1.1327);margin-right:1.008px">&gt;</span><span class="bd" style="transform:scaleX(1.1990);margin-right:1.440px">0</span><span class="m" style="transform:scaleX(1.1327);margin-right:1.489px">&lt;/</span><span class="r" style="transform:scaleX(1.1339);margin-right:3.678px">Data</span><span class="m" style="transform:scaleX(1.1327);margin-right:1.008px">&gt;</span></div>
<div class="x" style="left:51px;top:457px"><span class="m" style="transform:scaleX(1.1327);margin-right:1.008px">&lt;</span><span class="r" style="transform:scaleX(1.1339);margin-right:3.678px">Data</span><span class="r" style="transform:scaleX(1.1339);margin-right:5.128px"> Name</span><span class="m" style="transform:scaleX(1.1327);margin-right:1.621px">="</span><span class="bu" style="transform:scaleX(1.0047);margin-right:0.044px">C</span><span class="b" style="transform:scaleX(1.2002);margin-right:12.295px">heckpoint</span><span class="m" style="transform:scaleX(1.1327);margin-right:0.614px">"</span><span class="m" style="transform:scaleX(1.1327);margin-right:1.008px">&gt;</span><span class="bd" style="transform:scaleX(1.1990);margin-right:1.440px">0</span><span class="m" style="transform:scaleX(1.1327);margin-right:1.489px">&lt;/</span><span class="r" style="transform:scaleX(1.1339);margin-right:3.678px">Data</span><span class="m" style="transform:scaleX(1.1327);margin-right:1.008px">&gt;</span></div>
<div class="x" style="left:51px;top:474px"><span class="m" style="transform:scaleX(1.1327);margin-right:1.008px">&lt;</span><span class="r" style="transform:scaleX(1.1339);margin-right:3.678px">Data</span><span class="r" style="transform:scaleX(1.1339);margin-right:5.128px"> Name</span><span class="m" style="transform:scaleX(1.1327);margin-right:1.621px">="</span><span class="bu" style="transform:scaleX(1.0047);margin-right:0.044px">C</span><span class="b" style="transform:scaleX(1.2002);margin-right:11.572px">onnected</span><span class="bu" style="transform:scaleX(1.0047);margin-right:0.041px">S</span><span class="b" style="transform:scaleX(1.2002);margin-right:8.535px">tandby</span><span class="bu" style="transform:scaleX(1.0047);margin-right:0.017px">I</span><span class="b" style="transform:scaleX(1.2002);margin-right:1.592px">n</span><span class="bu" style="transform:scaleX(1.0047);margin-right:0.041px">P</span><span class="b" style="transform:scaleX(1.2002);margin-right:9.551px">rogress</span><span class="m" style="transform:scaleX(1.1327);margin-right:0.614px">"</span><span class="m" style="transform:scaleX(1.1327);margin-right:1.008px">&gt;</span><span class="b" style="transform:scaleX(1.2002);margin-right:5.935px">false</span><span class="m" style="transform:scaleX(1.1327);margin-right:1.489px">&lt;/</span><span class="r" style="transform:scaleX(1.1339);margin-right:3.678px">Data</span><span class="m" style="transform:scaleX(1.1327);margin-right:1.008px">&gt;</span></div>
<div class="x" style="left:51px;top:491px"><span class="m" style="transform:scaleX(1.1327);margin-right:1.008px">&lt;</span><span class="r" style="transform:scaleX(1.1339);margin-right:3.678px">Data</span><span class="r" style="transform:scaleX(1.1339);margin-right:5.128px"> Name</span><span class="m" style="transform:scaleX(1.1327);margin-right:1.621px">="</span><span class="bu" style="transform:scaleX(1.0047);margin-right:0.041px">S</span><span class="b" style="transform:scaleX(1.2002);margin-right:7.524px">ystem</span><span class="bu" style="transform:scaleX(1.0047);margin-right:0.041px">S</span><span class="b" style="transform:scaleX(1.2002);margin-right:5.209px">leep</span><span class="bu" style="transform:scaleX(1.0047);margin-right:0.037px">T</span><span class="b" style="transform:scaleX(1.2002);margin-right:12.439px">ransitions</span><span class="bu" style="transform:scaleX(1.0047);margin-right:0.037px">T</span><span class="b" style="transform:scaleX(1.2002);margin-right:1.592px">o</span><span class="bu" style="transform:scaleX(1.0047);margin-right:0.048px">O</span><span class="b" style="transform:scaleX(1.2002);margin-right:1.592px">n</span><span class="m" style="transform:scaleX(1.1327);margin-right:0.614px">"</span><span class="m" style="transform:scaleX(1.1327);margin-right:1.008px">&gt;</span><span class="bd" style="transform:scaleX(1.1990);margin-right:1.440px">5</span><span class="m" style="transform:scaleX(1.1327);margin-right:1.489px">&lt;/</span><span class="r" style="transform:scaleX(1.1339);margin-right:3.678px">Data</span><span class="m" style="transform:scaleX(1.1327);margin-right:1.008px">&gt;</span></div>
<div class="x" style="left:51px;top:508px"><span class="m" style="transform:scaleX(1.1327);margin-right:1.008px">&lt;</span><span class="r" style="transform:scaleX(1.1339);margin-right:3.678px">Data</span><span class="r" style="transform:scaleX(1.1339);margin-right:5.128px"> Name</span><span class="m" style="transform:scaleX(1.1327);margin-right:1.621px">="</span><span class="bu" style="transform:scaleX(1.0047);margin-right:0.044px">C</span><span class="b" style="transform:scaleX(1.2002);margin-right:1.448px">s</span><span class="bu" style="transform:scaleX(1.0047);margin-right:0.041px">E</span><span class="b" style="transform:scaleX(1.2002);margin-right:4.918px">ntry</span><span class="bu" style="transform:scaleX(1.0047);margin-right:0.041px">S</span><span class="b" style="transform:scaleX(1.2002);margin-right:9.260px">cenario</span><span class="bu" style="transform:scaleX(1.0047);margin-right:0.017px">I</span><span class="b" style="transform:scaleX(1.2002);margin-right:9.839px">nstance</span><span class="bu" style="transform:scaleX(1.0047);margin-right:0.017px">I</span><span class="b" style="transform:scaleX(1.2002);margin-right:1.592px">d</span><span class="m" style="transform:scaleX(1.1327);margin-right:0.614px">"</span><span class="m" style="transform:scaleX(1.1327);margin-right:1.008px">&gt;</span><span class="bd" style="transform:scaleX(1.1990);margin-right:1.440px">0</span><span class="m" style="transform:scaleX(1.1327);margin-right:1.489px">&lt;/</span><span class="r" style="transform:scaleX(1.1339);margin-right:3.678px">Data</span><span class="m" style="transform:scaleX(1.1327);margin-right:1.008px">&gt;</span></div>
<div class="x" style="left:51px;top:525px"><span class="m" style="transform:scaleX(1.1327);margin-right:1.008px">&lt;</span><span class="r" style="transform:scaleX(1.1339);margin-right:3.678px">Data</span><span class="r" style="transform:scaleX(1.1339);margin-right:5.128px"> Name</span><span class="m" style="transform:scaleX(1.1327);margin-right:1.621px">="</span><span class="bu" style="transform:scaleX(1.0047);margin-right:0.044px">B</span><span class="b" style="transform:scaleX(1.2002);margin-right:10.562px">ugcheck</span><span class="bu" style="transform:scaleX(1.0047);margin-right:0.017px">I</span><span class="b" style="transform:scaleX(1.2002);margin-right:4.048px">nfo</span><span class="bu" style="transform:scaleX(1.0047);margin-right:0.037px">F</span><span class="b" style="transform:scaleX(1.2002);margin-right:4.918px">rom</span><span class="bu" style="transform:scaleX(1.0047);margin-right:0.095px">EFI</span><span class="m" style="transform:scaleX(1.1327);margin-right:0.614px">"</span><span class="m" style="transform:scaleX(1.1327);margin-right:1.008px">&gt;</span><span class="b" style="transform:scaleX(1.2002);margin-right:5.935px">false</span><span class="m" style="transform:scaleX(1.1327);margin-right:1.489px">&lt;/</span><span class="r" style="transform:scaleX(1.1339);margin-right:3.678px">Data</span><span class="m" style="transform:scaleX(1.1327);margin-right:1.008px">&gt;</span></div>
<div class="x" style="left:51px;top:542px"><span class="m" style="transform:scaleX(1.1327);margin-right:1.008px">&lt;</span><span class="r" style="transform:scaleX(1.1339);margin-right:3.678px">Data</span><span class="r" style="transform:scaleX(1.1339);margin-right:5.128px"> Name</span><span class="m" style="transform:scaleX(1.1327);margin-right:1.621px">="</span><span class="bu" style="transform:scaleX(1.0047);margin-right:0.044px">C</span><span class="b" style="transform:scaleX(1.2002);margin-right:12.295px">heckpoint</span><span class="bu" style="transform:scaleX(1.0047);margin-right:0.041px">S</span><span class="b" style="transform:scaleX(1.2002);margin-right:6.219px">tatus</span><span class="m" style="transform:scaleX(1.1327);margin-right:0.614px">"</span><span class="m" style="transform:scaleX(1.1327);margin-right:1.008px">&gt;</span><span class="bd" style="transform:scaleX(1.1990);margin-right:1.440px">0</span><span class="m" style="transform:scaleX(1.1327);margin-right:1.489px">&lt;/</span><span class="r" style="transform:scaleX(1.1339);margin-right:3.678px">Data</span><span class="m" style="transform:scaleX(1.1327);margin-right:1.008px">&gt;</span></div>
</div>
<div class="a" style="left:1365px;top:23px;width:2px;height:940px;background:#6d6d6d;"></div>
<div class="a" style="left:1365px;top:23px;width:355px;height:2px;background:#6d6d6d;"></div>
<div class="a" style="left:1367px;top:25px;width:352px;height:19px;background:#f0f1f3;"></div>
<div class="t" style="left:1372px;top:29px;font-weight:bold;font-size:13px">Akce</div>
<div class="a" style="left:1367px;top:44px;width:352px;height:1px;background:#a5a5a5;"></div>
<div class="a" style="left:1367px;top:45px;width:352px;height:918px;background:#fff;"></div>
<div class="a" style="left:1719px;top:25px;width:1px;height:938px;background:#d9d9d9;"></div>
<div class="a" style="left:1720px;top:23px;width:1px;height:940px;background:#f6f6f6;"></div>
<div class="a" style="left:1367px;top:46px;width:352px;height:25px;background:linear-gradient(#bad4ed,#98b2d0)"></div>
<div class="t" style="left:1374px;top:52px;">Stránka souhrnu událostí</div>
<svg style="left:1702px;top:55px" width="11" height="7" viewBox="0 0 11 7"><path d="M0.5 6.5 L5.5 0.5 L10.5 6.5 Z" fill="#000"/></svg>
<div class="t" style="left:1398px;top:76px;">Otevřít uložený protokol...</div>
<div class="t" style="left:1398px;top:100px;letter-spacing:-0.107px">Vytvořit vlastní zobrazení...</div>
<div class="t" style="left:1398px;top:124px;letter-spacing:-0.050px">Importovat vlastní zobrazení...</div>
<div class="t" style="left:1398px;top:149px;letter-spacing:-0.116px">Filtrovat aktuální vlastní zobrazení...</div>
<div class="t" style="left:1398px;top:173px;">Vlastnosti</div>
<div class="t" style="left:1398px;top:197px;">Najít...</div>
<div class="t" style="left:1398px;top:221px;letter-spacing:-0.102px">Uložit všechny události ve vlastním zobrazení jako...</div>
<div class="t" style="left:1398px;top:245px;letter-spacing:-0.150px">Exportovat vlastní zobrazení...</div>
<div class="t" style="left:1398px;top:269px;letter-spacing:-0.148px">Kopírovat vlastní zobrazení...</div>
<div class="t" style="left:1398px;top:293px;letter-spacing:0.138px">Přidružit k tomuto pohledu úlohu...</div>
<div class="t" style="left:1398px;top:318px;">Zobrazit</div>
<div class="t" style="left:1398px;top:343px;">Odstranit</div>
<div class="t" style="left:1398px;top:367px;">Aktualizovat</div>
<div class="t" style="left:1398px;top:392px;">Nápověda</div>
<div class="a" style="left:1372px;top:143px;width:341px;height:1px;background:#e8e8e8;"></div>
<div class="a" style="left:1372px;top:312px;width:341px;height:1px;background:#e8e8e8;"></div>
<div class="a" style="left:1372px;top:337px;width:341px;height:1px;background:#e8e8e8;"></div>
<div class="a" style="left:1372px;top:386px;width:341px;height:1px;background:#e8e8e8;"></div>
<svg style="left:1370px;top:74px" width="20" height="20" viewBox="0 0 20 20"><defs><linearGradient id="fo" x1="0" y1="0" x2="0" y2="1"><stop offset="0" stop-color="#fbeaa8"/><stop offset="1" stop-color="#e6cf80"/></linearGradient></defs><path d="M12 3.5 H16" stroke="#6cb86c" stroke-width="1"/><path d="M2.5 7 L8 7 L8.5 6 L13 6 L13.8 7.5 L13.8 10 L2.5 16.5 Z" fill="#f3e3a4" stroke="#a08c50" stroke-width="0.9"/><path d="M2.5 16.5 L4.5 10 L15.5 10.5 L13.5 16.5 Z" fill="url(#fo)" stroke="#a08c50" stroke-width="0.9"/></svg><svg style="left:1373px;top:100px" width="16" height="16" viewBox="0 0 16 16"><defs><linearGradient id="fgb" x1="0" x2="1"><stop offset="0" stop-color="#d8e8f2"/><stop offset="0.5" stop-color="#7f9fb2"/><stop offset="1" stop-color="#34505f"/></linearGradient><linearGradient id="sgb" x1="0" x2="1"><stop offset="0" stop-color="#e0e8ee"/><stop offset="1" stop-color="#5a6e7a"/></linearGradient></defs><rect x="0" y="1" width="15" height="1.2" fill="#4a5660"/><rect x="1" y="2.2" width="13.5" height="1" fill="#d0e2ec"/><rect x="1" y="3.2" width="14" height="1" fill="#4e6c7e"/><path d="M1.5 4.2 L15 4.2 L9.6 9.8 L7.2 9.8 Z" fill="url(#fgb)"/><path d="M15 3 L9.6 9.2 L9.6 11" fill="none" stroke="#2e3c46" stroke-width="1.1" stroke-dasharray="1.2 0.6"/><rect x="7.2" y="9.5" width="2.2" height="5" fill="url(#sgb)"/><rect x="7" y="14.2" width="2.4" height="1.2" fill="#2e2e2e"/><circle cx="4.3" cy="4.6" r="3.3" fill="#f7b500"/><circle cx="3.8" cy="4" r="1.6" fill="#ffd84a"/></svg><svg style="left:1372px;top:148px" width="16" height="16" viewBox="0 0 16 16"><defs><linearGradient id="fga" x1="0" x2="1"><stop offset="0" stop-color="#d8e8f2"/><stop offset="0.5" stop-color="#7f9fb2"/><stop offset="1" stop-color="#34505f"/></linearGradient><linearGradient id="sga" x1="0" x2="1"><stop offset="0" stop-color="#e0e8ee"/><stop offset="1" stop-color="#5a6e7a"/></linearGradient></defs><rect x="0" y="1" width="15" height="1.2" fill="#4a5660"/><rect x="1" y="2.2" width="13.5" height="1" fill="#d0e2ec"/><rect x="1" y="3.2" width="14" height="1" fill="#4e6c7e"/><path d="M1.5 4.2 L15 4.2 L9.6 9.8 L7.2 9.8 Z" fill="url(#fga)"/><path d="M15 3 L9.6 9.2 L9.6 11" fill="none" stroke="#2e3c46" stroke-width="1.1" stroke-dasharray="1.2 0.6"/><rect x="7.2" y="9.5" width="2.2" height="5" fill="url(#sga)"/><rect x="7" y="14.2" width="2.4" height="1.2" fill="#2e2e2e"/></svg><svg style="left:1370px;top:170px" width="20" height="20" viewBox="0 0 20 20"><rect x="2.5" y="2.5" width="14" height="15" rx="0.8" fill="#f6f6f6" stroke="#6a6a6a" stroke-width="1"/><path d="M3.5 3.8 H14" stroke="#d8d8d8" stroke-width="0.8"/><path d="M13.5 2.5 L15.8 2.5 L14.6 4.2 Z" fill="#333"/><rect x="4.5" y="6.5" width="10" height="8" fill="#fff" stroke="#8a8a98" stroke-width="0.9"/><rect x="7.5" y="6.5" width="6.5" height="2" fill="#dcdce8" stroke="#8a8a98" stroke-width="0.8"/><circle cx="6.5" cy="10.5" r="0.6" fill="#3a6a6a"/><circle cx="6.5" cy="12.5" r="0.6" fill="#3a6a6a"/><path d="M8 10.5 H12.8 M8 12.5 H12.8" stroke="#707080" stroke-width="0.9"/><rect x="8" y="15" width="4" height="2.5" fill="#3a9aa0"/></svg><svg style="left:1370px;top:194px" width="20" height="20" viewBox="0 0 20 20"><defs><linearGradient id="bl" x1="0" y1="0" x2="1" y2="1"><stop offset="0" stop-color="#2a7ab0"/><stop offset="0.5" stop-color="#c8f0ff"/><stop offset="1" stop-color="#2a7ab0"/></linearGradient></defs><path d="M3 3 L4 2 L7 2 L8 3 L8 12 L2 12 L2 7 L3 6 Z" fill="#2e3a44"/><rect x="4" y="4" width="3" height="6" fill="#dfe4ea"/><path d="M12 3 L13 2 L16 2 L17 3 L17 6 L18 7 L18 12 L12 12 Z" fill="#2e3a44"/><rect x="13" y="4" width="3" height="6" fill="#dfe4ea"/><rect x="8" y="4" width="4" height="8" fill="#2e3a44"/><rect x="9.3" y="7" width="1.4" height="3" fill="#dfe4ea"/><rect x="9.3" y="4.5" width="1.4" height="1" fill="#fff"/><rect x="3.5" y="12.5" width="4" height="4.5" fill="url(#bl)"/><rect x="12.5" y="12.5" width="4" height="4.5" fill="url(#bl)"/><path d="M2.5 13 V14.5 M8.5 13 V14.5 M11.5 13 V14.5 M17.5 13 V14.5" stroke="#1e3a50" stroke-width="0.9"/><rect x="3" y="17" width="5" height="1" fill="#1e3a50"/><rect x="12" y="17" width="5" height="1" fill="#1e3a50"/></svg><svg style="left:1370px;top:218px" width="20" height="20" viewBox="0 0 20 20"><rect x="3" y="2" width="14" height="15" fill="#1e1e1e"/><rect x="3" y="4" width="1" height="1" fill="#fff"/><rect x="16" y="4" width="1" height="1" fill="#fff"/><rect x="5" y="2.7" width="10.5" height="8.3" fill="#f4f4f4"/><rect x="3.2" y="2" width="13.6" height="0.7" fill="#9a9a9a"/><rect x="6" y="12.5" width="9" height="4.5" fill="#cfcfcf"/><rect x="7.3" y="13" width="1.8" height="2.8" fill="#1e1e1e"/></svg><svg style="left:1372px;top:342px" width="16" height="16" viewBox="0 0 16 16"><path d="M2.2 2.2 L13.8 13.8 M13.8 2.2 L2.2 13.8" stroke="#d01020" stroke-width="3.4" stroke-linecap="round"/><path d="M2.6 2.6 L6.5 6.5 M13.4 2.6 L9.5 6.5" stroke="#f08090" stroke-width="1" stroke-linecap="round"/></svg><svg style="left:1370px;top:364px" width="20" height="20" viewBox="0 0 20 20"><path d="M4.5 2.5 L13.5 2.5 L16.5 5.5 L16.5 17.5 L4.5 17.5 Z" fill="#fff" stroke="#7a7a7a" stroke-width="1"/><path d="M13.5 2.5 V5.5 H16.5" fill="#eee" stroke="#9a9a9a" stroke-width="0.8"/><path d="M13.6 12.6 A3.8 3.8 0 1 1 12.4 7.3" fill="none" stroke="#3aa83a" stroke-width="2.2"/><path d="M10.8 13.8 L14.8 10.6 L14.9 14.8 Z" fill="#2a9a2a"/></svg><svg style="left:1373px;top:391px" width="14" height="16" viewBox="0 0 14 16"><rect x="0" y="0" width="13.5" height="16" fill="#23419c"/><rect x="2.5" y="1" width="10" height="14" fill="#5a7ad6"/><path d="M5 5.5 Q5 3 7.5 3 Q10 3 10 5.3 Q10 7 8 8 L8 10" fill="none" stroke="#fff" stroke-width="1.6"/><rect x="7.1" y="11.5" width="1.8" height="2" fill="#fff"/></svg><svg style="left:1705px;top:319px" width="6" height="11" viewBox="0 0 6 11"><path d="M0.5 0.5 L5.5 5.5 L0.5 10.5 Z" fill="#000"/></svg><svg style="left:1705px;top:393px" width="6" height="11" viewBox="0 0 6 11"><path d="M0.5 0.5 L5.5 5.5 L0.5 10.5 Z" fill="#000"/></svg>
<div class="a" style="left:1367px;top:416px;width:352px;height:25px;background:linear-gradient(#bad4ed,#98b2d0)"></div>
<div class="t" style="left:1374px;top:422px;letter-spacing:-0.18px">Událost 41, Kernel-Power</div>
<svg style="left:1702px;top:426px" width="11" height="7" viewBox="0 0 11 7"><path d="M0.5 0.5 L5.5 6.5 L10.5 0.5 Z" fill="#000"/></svg>
<div class="a" style="left:0px;top:964px;width:1721px;height:1px;background:#d7d7d7;"></div>
<div class="a" style="left:0px;top:965px;width:1721px;height:22px;background:#f0f0f0;"></div>
<div class="a" style="left:1500px;top:966px;width:1px;height:21px;background:#cfcfcf;"></div>
<div class="a" style="left:1633px;top:966px;width:1px;height:21px;background:#cfcfcf;"></div>
<div class="a" style="left:1718px;top:966px;width:1px;height:21px;background:#cfcfcf;"></div>
<div class="a" style="left:0px;top:987px;width:1721px;height:10px;background:#d3e1e9;"></div>
<div class="a" style="left:0px;top:987px;width:192px;height:10px;background:#fff;"></div>
<div class="a" style="left:0px;top:987px;width:192px;height:1px;background:#c9c9c9;"></div>
<div class="a" style="left:192px;top:987px;width:1px;height:10px;background:#c4ccd0;"></div>
<div class="a" style="left:733px;top:987px;width:48px;height:10px;background:#e6eef3;"></div>
<div class="t" style="left:1621px;top:991px;font-size:12px;color:#000">17:46</div>
<div class="a" style="left:1716px;top:987px;width:1px;height:10px;background:#8a9aa2;"></div>
<svg style="left:300px;top:987px" width="480" height="10" viewBox="0 0 480 10"><circle cx="16" cy="15" r="9" fill="#1fa8b8"/><circle cx="65" cy="10" r="3" fill="#1a4f8a"/><rect x="108" y="7" width="12" height="4" fill="#3aa0e8"/><rect x="151" y="7" width="8" height="4" fill="#1a3f9a"/><rect x="161" y="7" width="3" height="4" fill="#9aa4b4"/><rect x="166" y="7" width="8" height="4" fill="#1a3f9a"/><circle cx="212" cy="14" r="6" fill="#e03030"/><rect x="400" y="8" width="14" height="3" fill="#9aa8b8"/><circle cx="455" cy="14" r="7" fill="#d84a10"/></svg>
</body></html>
